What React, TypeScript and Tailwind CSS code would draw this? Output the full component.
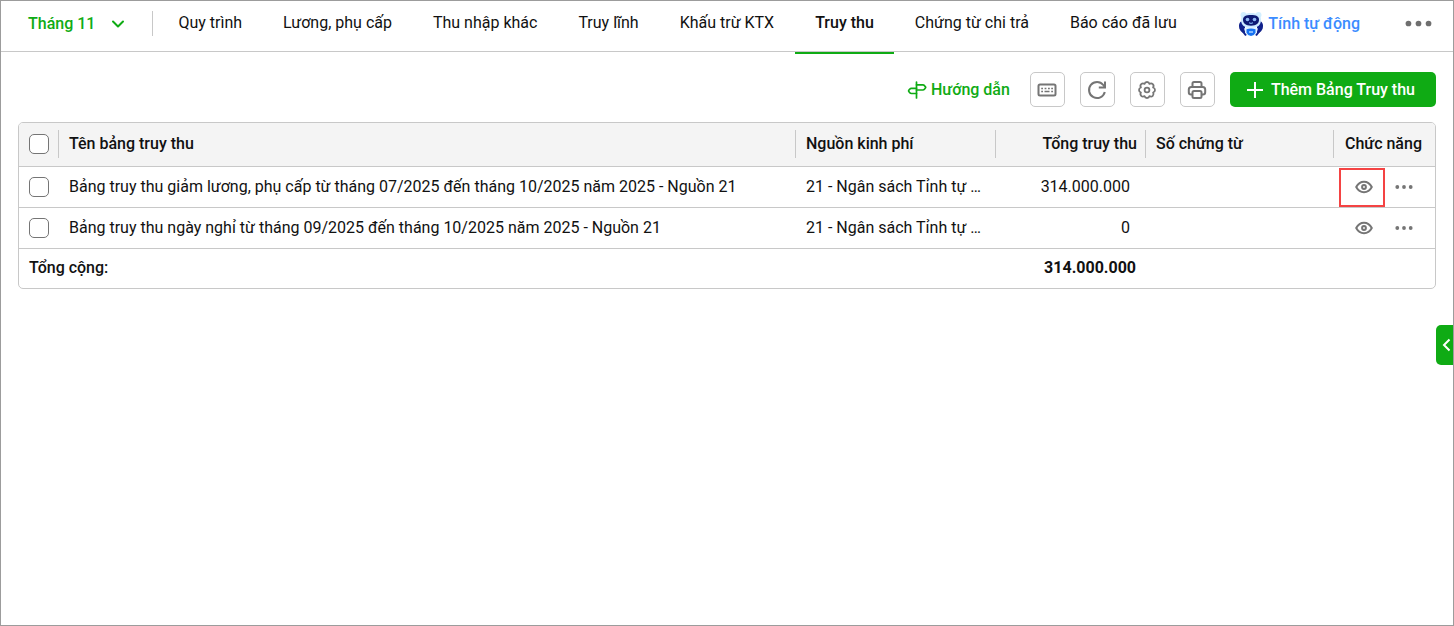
import { useState } from "react"
import { clsx } from "clsx"

const tabs = [
  "Quy trình",
  "Lương, phụ cấp",
  "Thu nhập khác",
  "Truy lĩnh",
  "Khấu trừ KTX",
  "Truy thu",
  "Chứng từ chi trả",
  "Báo cáo đã lưu",
]

const rows = [
  {
    id: 1,
    name: "Bảng truy thu giảm lương, phụ cấp từ tháng 07/2025 đến tháng 10/2025 năm 2025 - Nguồn 21",
    source: "21 - Ngân sách Tỉnh tự chủ",
    total: "314.000.000",
    highlighted: true,
  },
  {
    id: 2,
    name: "Bảng truy thu ngày nghỉ từ tháng 09/2025 đến tháng 10/2025 năm 2025 - Nguồn 21",
    source: "21 - Ngân sách Tỉnh tự chủ",
    total: "0",
    highlighted: false,
  },
]

const ChevronIcon = () => (
  <svg width="14" height="14" viewBox="0 0 14 14" fill="none" stroke="currentColor" strokeWidth="2" strokeLinecap="round" strokeLinejoin="round">
    <path d="M2 4.500 7 9.500l5-5" />
  </svg>
)

const RobotIcon = () => (
  <svg width="26" height="26" viewBox="0 0 26 26">
    <circle cx="5.500" cy="4" r="3" fill="#d3efff" />
    <circle cx="20.500" cy="4" r="3" fill="#d3efff" />
    <path d="M4 10c-3 1-3.800 5-2.200 8.500C3 21 5 22.500 7 22L7 13z" fill="#10218b" />
    <path d="M22 10c3 1 3.800 5 2.200 8.500C23 21 21 22.500 19 22l0-9z" fill="#10218b" />
    <path d="M3 9C3 4 7 2 13 2s10 2 10 7-3.500 8-10 8S3 14 3 9z" fill="#cdeaff" />
    <path d="M5 8.800C5 5.300 8 4 13 4s8 1.300 8 4.800-2.700 5.900-8 5.900-8-2.400-8-5.900z" fill="#0d1a73" />
    <circle cx="9.500" cy="8.500" r="1.800" fill="#8fb8f5" />
    <circle cx="16.500" cy="8.500" r="1.800" fill="#8fb8f5" />
    <path d="M11 11.800q2 1.200 4 0" fill="none" stroke="#8ec6ff" />
    <path d="M6 17.500q7-2.500 14 0l-2 6q-5 3-10 0z" fill="#dff2ff" />
    <path d="M8.500 18.300q4.500-1.500 9 0v3.500q-1.500 3-4.500 3.200-3-.2-4.500-3.200z" fill="#1672f3" />
    <path d="M11 21h4" stroke="#a8d3ff" strokeWidth="1.500" />
    <path d="m4.500 20 3.500 4.500M21.500 20 18 24.500" stroke="#10218b" strokeWidth="2" />
  </svg>
)

const SignpostIcon = () => (
  <svg width="20" height="20" viewBox="0 0 20 20" fill="none" stroke="currentColor" strokeWidth="1.700" strokeLinecap="round" strokeLinejoin="round">
    <path d="M9.500 2v16" />
    <path d="M9.500 4.800h6.300q1 0 1.600.8l1 1.200q.5.700 0 1.200l-1 1.200q-.6.800-1.600.8H9.500" />
    <path d="M9.500 8.300H4.400q-1 0-1.600.8l-1 1.200q-.5.700 0 1.200l1 1.200q.6.800 1.600.8h5.100" />
  </svg>
)

const KeyboardIcon = () => (
  <svg width="20" height="20" viewBox="0 0 20 20" fill="none" stroke="currentColor">
    <rect x="1.500" y="4.500" width="17" height="11" rx="1.500" strokeWidth="2" />
    <path d="M4.200 8.500H6M7.600 8.500h1.800M11 8.500h1.800M14.200 8.500H16M4.200 11.500H6M7.500 11.500h5M14.200 11.500H16" strokeWidth="1.600" />
  </svg>
)

const RefreshIcon = () => (
  <svg width="20" height="20" viewBox="0 0 20 20" fill="none" stroke="currentColor" strokeWidth="2">
    <path d="M17.800 12a8 8 0 1 1-1.500-7L17.500 6.800" />
    <path d="M18 1.500v6h-6.200" />
  </svg>
)

const GearIcon = () => (
  <svg width="18" height="18" viewBox="0 0 18 18" fill="none" stroke="currentColor" strokeWidth="1.800" strokeLinejoin="round">
    <path d="M6.500 2.900a2.600 2.600 0 0 1 5 0a2.600 2.600 0 0 1 3.600 3.600a2.600 2.600 0 0 1 0 5a2.600 2.600 0 0 1-3.600 3.600a2.600 2.600 0 0 1-5 0a2.600 2.600 0 0 1-3.600-3.600a2.600 2.600 0 0 1 0-5a2.600 2.600 0 0 1 3.600-3.600z" />
    <circle cx="9" cy="9" r="2.400" />
  </svg>
)

const PrinterIcon = () => (
  <svg width="20" height="20" viewBox="0 0 20 20" fill="none" stroke="currentColor" strokeWidth="2" strokeLinejoin="round">
    <path d="M5.500 7V3.500q0-1.500 1.500-1.500h6q1.500 0 1.500 1.500V7" />
    <path d="M5.500 14.500H4Q1.800 14.500 1.800 12.300V9.500Q1.800 7 4.300 7h11.400q2.500 0 2.500 2.500v2.800q0 2.200-2.200 2.200h-1.500" />
    <rect x="5.500" y="11" width="9" height="7" rx="1.500" />
  </svg>
)

const EyeIcon = () => (
  <svg width="18" height="18" viewBox="0 0 18 18" fill="none" stroke="currentColor">
    <path d="M1.200 9Q4 3.800 9 3.800T16.800 9Q14 14.200 9 14.200T1.200 9z" strokeWidth="2" strokeLinejoin="round" />
    <circle cx="9" cy="9" r="1.900" strokeWidth="2" />
  </svg>
)

const DotsIcon = ({ size = 18 }: { size?: number }) => (
  <svg width={size} height={size} viewBox="0 0 18 18" fill="currentColor">
    <circle cx="2.300" cy="9" r="1.900" />
    <circle cx="9" cy="9" r="1.900" />
    <circle cx="15.700" cy="9" r="1.900" />
  </svg>
)

const tools = [
  { label: "Phím tắt", icon: <KeyboardIcon /> },
  { label: "Tải lại", icon: <RefreshIcon /> },
  { label: "Thiết lập", icon: <GearIcon /> },
  { label: "In", icon: <PrinterIcon /> },
]

const Checkbox = ({ label, checked, onChange }: { label: string; checked: boolean; onChange: () => void }) => (
  <input
    type="checkbox"
    aria-label={label}
    checked={checked}
    onChange={onChange}
    className="block size-5 appearance-none rounded-[5px] border border-[#757575] bg-white checked:border-[#0fab14] checked:bg-[#0fab14]"
  />
)

const App = () => {
  const [activeTab, setActiveTab] = useState("Truy thu")
  const [selected, setSelected] = useState<number[]>([])

  const toggle = (id: number) => {
    setSelected((prev) => (prev.includes(id) ? prev.filter((item) => item !== id) : [...prev, id]))
  }

  const allSelected = selected.length === rows.length

  return (
    <div className="relative min-h-screen border border-[#9c9c9c] bg-white font-['Roboto',sans-serif] text-base text-[#111]">
      <header className="flex h-[51px] items-start border-b border-[#c8c8c8]">
        <button className="ml-[27px] flex h-[45px] items-center gap-4 font-medium text-[#0fab14]">
          Tháng 11
          <ChevronIcon />
        </button>
        <div className="mt-2.5 ml-[27px] h-[25px] w-px bg-[#c8c8c8]" />
        <nav className="ml-[5px] flex gap-px">
          {tabs.map((tab) => (
            <button
              key={tab}
              onClick={() => setActiveTab(tab)}
              className={clsx(
                "h-[53px] border-b-2 px-5 pb-2 whitespace-nowrap",
                activeTab === tab ? "border-[#0fab14] font-medium" : "border-transparent"
              )}
            >
              {tab}
            </button>
          ))}
        </nav>
        <div className="mr-[21px] ml-auto flex h-[45px] items-center gap-[45px]">
          <button className="flex items-center gap-1 font-medium whitespace-nowrap text-[#3b8cff]">
            <RobotIcon />
            Tính tự động
          </button>
          <button aria-label="Thêm" className="text-[#6f6f6f]">
            <DotsIcon size={27} />
          </button>
        </div>
      </header>

      <main className="px-[17px] pt-5">
        <div className="flex items-center justify-end gap-[15px]">
          <a href="#huong-dan" className="mr-[5px] flex items-center gap-1 font-medium text-[#0fab14]">
            <SignpostIcon />
            Hướng dẫn
          </a>
          {tools.map((tool) => (
            <button
              key={tool.label}
              aria-label={tool.label}
              className="flex size-[35px] items-center justify-center rounded-[5px] border border-[#c8c8c8] text-[#757575]"
            >
              {tool.icon}
            </button>
          ))}
          <button className="flex h-[35px] items-center gap-[7px] rounded-[5px] bg-[#0fab14] pr-[21px] pl-4 font-medium text-white">
            <svg width="18" height="18" viewBox="0 0 18 18" stroke="currentColor" strokeWidth="2">
              <path d="M9 1v16M1 9h16" />
            </svg>
            Thêm Bảng Truy thu
          </button>
        </div>

        <div className="mt-[15px] overflow-hidden rounded-[5px] border border-[#c8c8c8]">
          <table className="w-full table-fixed border-separate border-spacing-0 text-left">
            <colgroup>
              <col className="w-10" />
              <col />
              <col className="w-[200px]" />
              <col className="w-[150px]" />
              <col className="w-[188px]" />
              <col className="w-[101px]" />
            </colgroup>
            <thead className="bg-[#f4f4f4]">
              <tr className="h-11 leading-7 [&>th]:border-b [&>th]:border-[#c8c8c8] [&>th]:px-0 [&>th]:pt-[7px] [&>th]:pb-2 [&>th]:font-medium">
                <th>
                  <div className="flex h-7 items-center border-r border-[#c8c8c8] pl-2.5">
                    <Checkbox
                      label="Chọn tất cả"
                      checked={allSelected}
                      onChange={() => setSelected(allSelected ? [] : rows.map((row) => row.id))}
                    />
                  </div>
                </th>
                <th>
                  <div className="h-7 border-r border-[#c8c8c8] px-2.5">Tên bảng truy thu</div>
                </th>
                <th>
                  <div className="h-7 border-r border-[#c8c8c8] px-2.5">Nguồn kinh phí</div>
                </th>
                <th>
                  <div className="h-7 border-r border-[#c8c8c8] px-2 text-right">Tổng truy thu</div>
                </th>
                <th>
                  <div className="h-7 border-r border-[#c8c8c8] px-2.5">Số chứng từ</div>
                </th>
                <th>
                  <div className="h-7 px-[11px]">Chức năng</div>
                </th>
              </tr>
            </thead>
            <tbody>
              {rows.map((row) => (
                <tr key={row.id} className="h-[41px] [&>td]:border-b [&>td]:border-[#c8c8c8] [&>td]:py-0">
                  <td className="pl-2.5">
                    <Checkbox label={row.name} checked={selected.includes(row.id)} onChange={() => toggle(row.id)} />
                  </td>
                  <td className="truncate px-2.5">{row.name}</td>
                  <td className="truncate px-2.5">{row.source}</td>
                  <td className="pr-4 text-right">{row.total}</td>
                  <td />
                  <td className="pl-[5px]">
                    <div className="flex items-center gap-0.5 text-[#757575]">
                      <button
                        aria-label="Xem"
                        className={clsx(
                          "flex h-[39px] w-[46px] items-center justify-center border-2 pl-1",
                          row.highlighted ? "border-[#f44343]" : "border-transparent"
                        )}
                      >
                        <EyeIcon />
                      </button>
                      <button aria-label="Thao tác khác" className="flex h-9 w-[34px] items-center justify-center">
                        <DotsIcon />
                      </button>
                    </div>
                  </td>
                </tr>
              ))}
            </tbody>
            <tfoot>
              <tr className="h-[39px] font-medium">
                <td colSpan={3} className="px-2.5 pt-0 pb-0.5">
                  Tổng cộng:
                </td>
                <td className="pt-0 pr-2.5 pb-0.5 text-right font-bold">314.000.000</td>
                <td colSpan={2} />
              </tr>
            </tfoot>
          </table>
        </div>
      </main>

      {/* Panel toggle pinned to the right edge */}
      <button
        aria-label="Mở bảng bên"
        className="absolute top-[324px] right-0 flex h-10 w-[17px] items-center justify-center rounded-l-[5px] bg-[#0fab14] pl-1 text-white"
      >
        <svg width="9" height="14" viewBox="0 0 9 14" fill="none" stroke="currentColor" strokeWidth="2">
          <path d="M7.500 1.500 2 7l5.500 5.500" />
        </svg>
      </button>
    </div>
  )
}

export default App
